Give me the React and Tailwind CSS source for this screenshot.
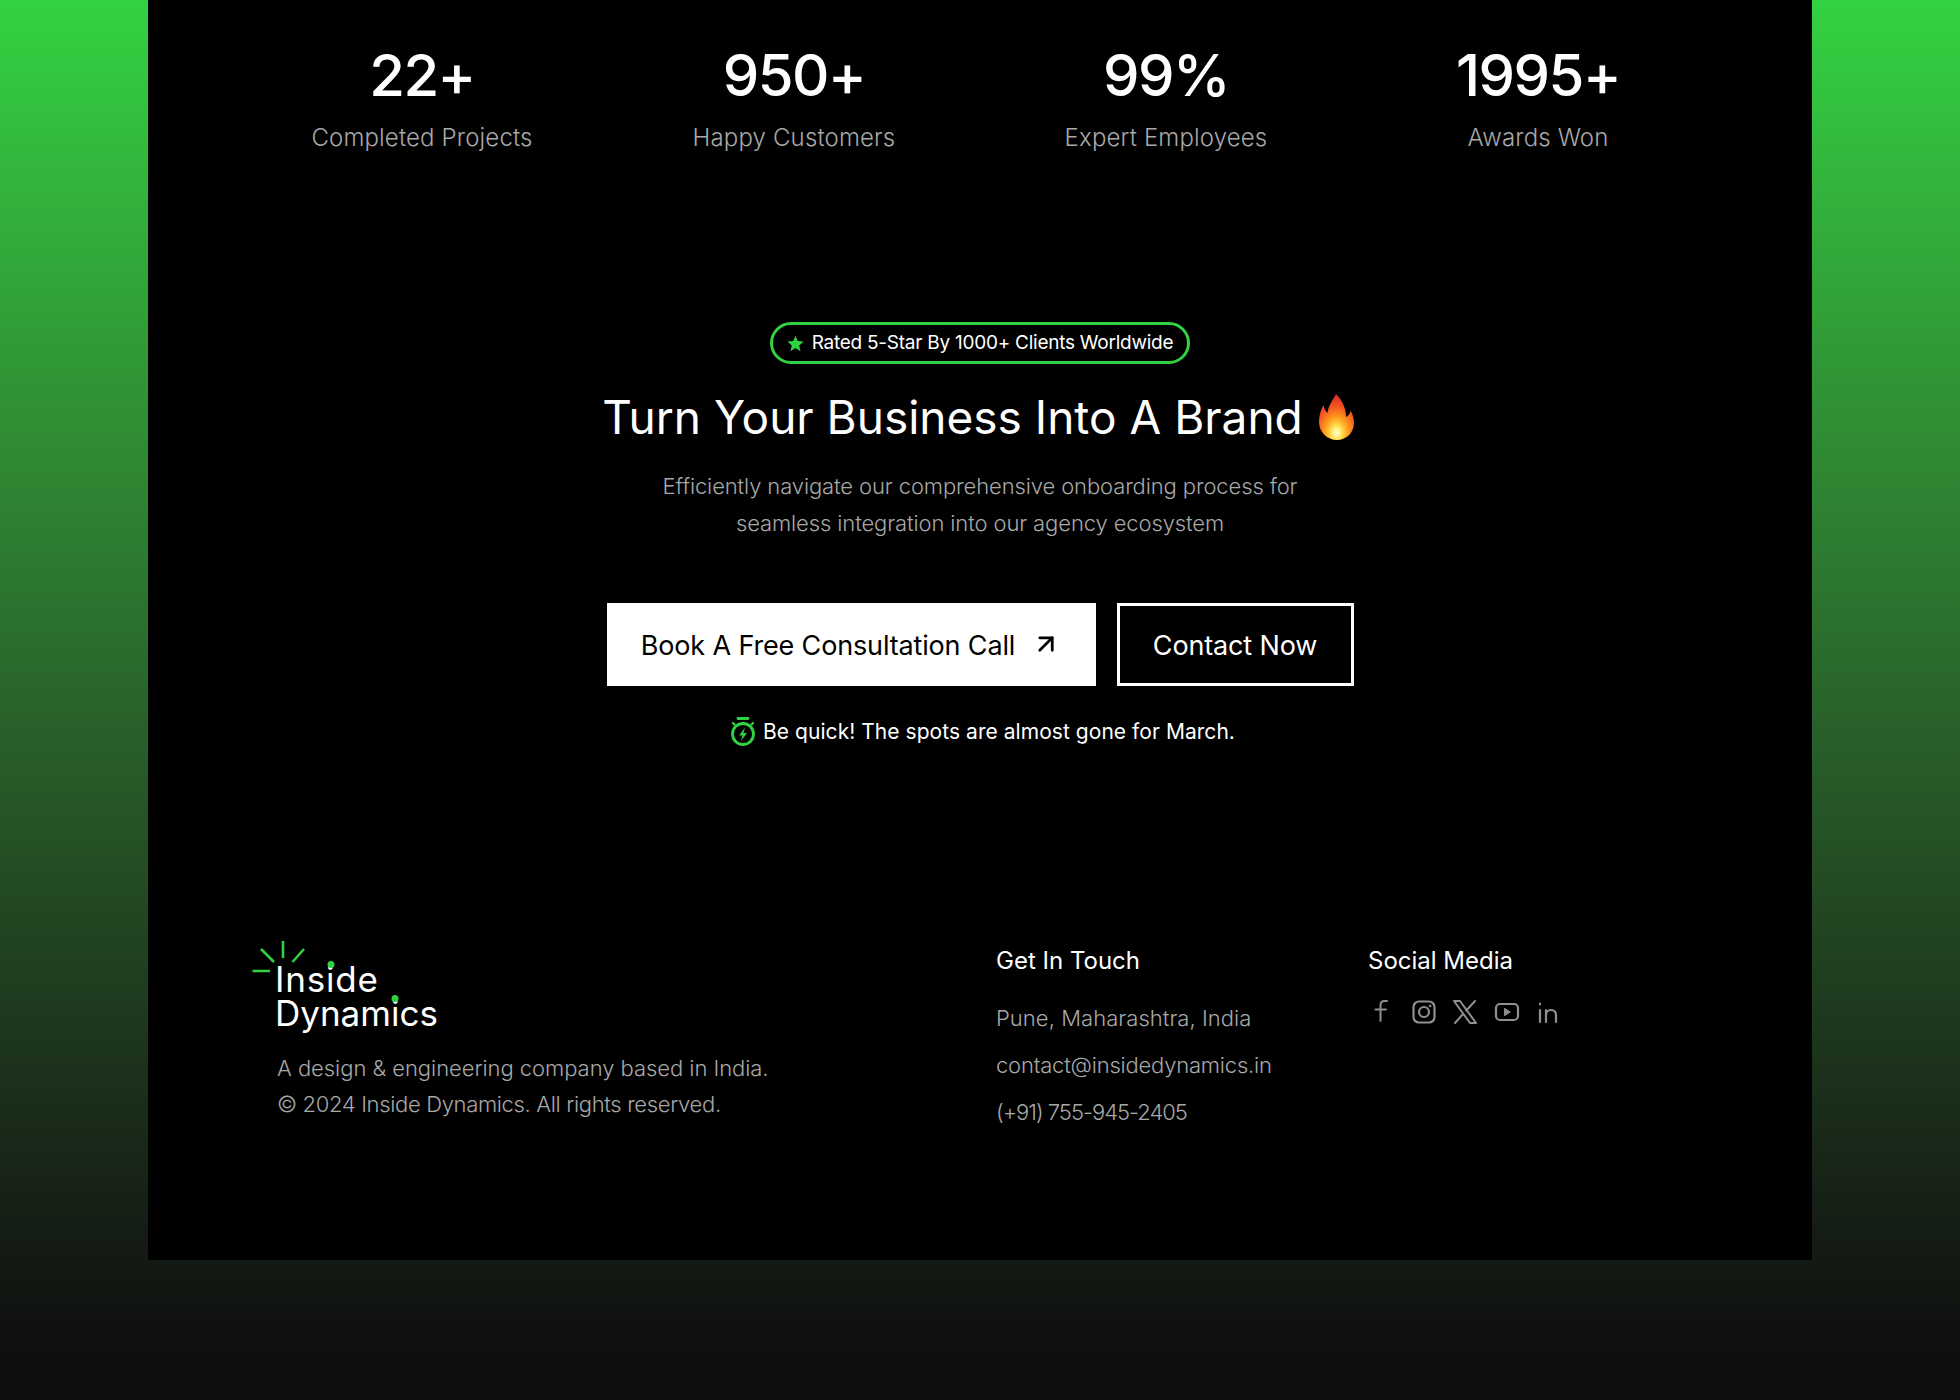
import React from "react";
import { ArrowUpRight } from "lucide-react";

const stats = [
  ["22+", "Completed Projects"],
  ["950+", "Happy Customers"],
  ["99%", "Expert Employees"],
  ["1995+", "Awards Won"],
];

function Flame() {
  return (
    <svg width="36" height="46" viewBox="0 0 36 46" className="shrink-0 mr-[3px]">
      <defs>
        <radialGradient id="fl" cx="0.5" cy="0.84" r="0.82">
          <stop offset="0" stopColor="#fffde7" />
          <stop offset="0.16" stopColor="#ffe95c" />
          <stop offset="0.38" stopColor="#ffa51f" />
          <stop offset="0.68" stopColor="#f4591e" />
          <stop offset="1" stopColor="#d92b2b" />
        </radialGradient>
      </defs>
      <path d="M17 0C14 6 9 12 8.500 19 6 17 5 14 4.500 11 1.500 16 0 22 0 28c0 10 8 18 18 18s17-8 17-17c0-4-1-9-3.500-12-.5 3-2.500 5-4.500 6 0-9-4-17-10-23z" fill="url(#fl)" />
    </svg>
  );
}

function Stopwatch() {
  return (
    <svg width="26" height="30" viewBox="0 0 26 30" fill="none" stroke="#32d142" strokeWidth="2.800" strokeLinecap="round" strokeLinejoin="round">
      <path d="M8 1.500h10" />
      <circle cx="13" cy="17" r="10.500" />
      <path d="M21.500 7.500l1.500 -1.500M4.500 7.500L3 6" strokeWidth="2.400" />
      <path d="M15 10.500l-6 8h3.500l-1.500 5.500 6-8h-3.500z" fill="#32d142" stroke="none" />
    </svg>
  );
}

function Rays() {
  return (
    <svg width="56" height="36" viewBox="0 0 56 36" fill="none" stroke="#32d142" strokeWidth="2.600" className="absolute left-[-23px] top-[-21px]">
      <path d="M31 0v17M9 8l13 13M52 8L40.500 21M0.500 30h17.500" />
    </svg>
  );
}

function LogoI() {
  return (
    <span className="relative">
      i
      <span className="absolute left-1/2 top-[3px] h-[7px] w-[7px] -translate-x-1/2 rounded-full bg-[#32d142]" />
    </span>
  );
}

function Social() {
  const p = { width: 28, height: 28, viewBox: "0 0 28 28", fill: "none", stroke: "#8f8f8f", strokeWidth: 2, strokeLinecap: "round", strokeLinejoin: "round" };
  return (
    <div className="flex items-center gap-[13.500px]">
      <svg {...p}><path d="M19 3h-2.500C14 3 12.500 4.500 12.500 7v16M7.500 11.500H18" /></svg>
      <svg {...p}><rect x="3.500" y="3.500" width="21" height="21" rx="5.500" strokeWidth="2.200" /><circle cx="14" cy="14" r="5" strokeWidth="2.200" /><circle cx="20" cy="8" r="1" fill="#8f8f8f" strokeWidth="0.800" /></svg>
      <svg {...p} strokeWidth="2"><path d="M3 3h6l16 22h-6z" /><path d="M24 3l-8.700 9.500M12 16L4 25" /></svg>
      <svg {...p}><rect x="3" y="6" width="22" height="16" rx="4" strokeWidth="2.200" /><path d="M11.800 10.500l5.500 3.500-5.500 3.500z" fill="#8f8f8f" strokeWidth="1" /></svg>
      <svg {...p}><path d="M6 12v12M6 5.500v.8M12 24V12M12 17c0-3 2.500-5 5-5 3.500 0 5 2 5 5.500V24" strokeWidth="2.200" /></svg>
    </div>
  );
}

export default function App() {
  return (
    <div className="h-[1400px] bg-gradient-to-b from-[#33d241] to-[#0e0e0e] to-[97%] font-['Inter','Liberation_Sans',sans-serif]">
      <div className="mx-[148px] h-[1260px] bg-black flex flex-col">
        <div className="mx-[88px] grid grid-cols-4 pt-[38px]">
          {stats.map(([n, l]) => (
            <div key={l} className="flex flex-col items-center">
              <div className="text-[58px] leading-[74px] font-medium tracking-[-1.500px] text-white">{n}</div>
              <div className="mt-[13px] text-[24px] leading-[26px] font-light tracking-[0.150px] text-[#a8a8a8]">{l}</div>
            </div>
          ))}
        </div>

        <div className="mt-[171px] flex flex-col items-center">
          <div className="h-[42px] w-[420px] rounded-full border-[3px] border-[#32d142] flex items-center justify-center gap-[8px]">
            <svg width="17" height="17" viewBox="0 0 24 24" fill="#32d142"><path d="M12 1l3.200 7.600 8.300.7-6.300 5.400 1.900 8.100L12 18.500l-7.100 4.300 1.900-8.100L.5 9.300l8.300-.7z" /></svg>
            <span className="text-[19px] font-normal text-white tracking-[-0.250px]">Rated 5-Star By 1000+ Clients Worldwide</span>
          </div>
          <div className="mt-[26px] h-[54px] flex items-center gap-[16px]">
            <h2 className="text-[46px] leading-[54px] font-normal text-white">Turn Your Business Into A Brand</h2>
            <Flame />
          </div>
          <p className="mt-[24px] text-center text-[22px] leading-[36.500px] font-light tracking-[-0.110px] text-[#a8a8a8]">
            Efficiently navigate our comprehensive onboarding process for
            <br />
            seamless integration into our agency ecosystem
          </p>
          <div className="mt-[62px] flex gap-[21px]">
            <button className="h-[83px] w-[489px] bg-white text-black flex items-center justify-center gap-[16px] pt-[3px] text-[27px] tracking-[-0.150px] font-normal">
              Book A Free Consultation Call
              <ArrowUpRight size={30} strokeWidth={2.200} className="mt-[-4px]" />
            </button>
            <button className="h-[83px] w-[237px] bg-black text-white border-[3px] border-white pt-[3px] text-[27px] tracking-[-0.150px] font-normal">
              Contact Now
            </button>
          </div>
          <div className="mt-[32px] ml-[5px] h-[28px] flex items-center gap-[7px]">
            <Stopwatch />
            <span className="text-[21px] font-normal tracking-[0.050px] text-white">Be quick! The spots are almost gone for March.</span>
          </div>
        </div>

        <div className="mt-[200px] ml-[129px] flex">
          <div className="w-[719px]">
            <div className="relative w-fit text-[35px] leading-[34px] font-normal text-white ml-[-2px] mt-[16px]">
              <Rays />
              <div className="tracking-[0.800px]">Ins<LogoI />de</div>
              <div>Dynam<LogoI />cs</div>
            </div>
            <p className="mt-[20px] text-[22px] leading-[36px] font-light text-[#a8a8a8]">
              <span className="block tracking-[-0.050px]">A design &amp; engineering company based in India.</span>
              <span className="block tracking-[-0.340px]">© 2024 Inside Dynamics. All rights reserved.</span>
            </p>
          </div>
          <div className="w-[372px]">
            <div className="text-[24px] leading-[30px] text-white font-normal">Get In Touch</div>
            <div className="mt-[27px] flex flex-col gap-[17px] text-[22px] leading-[30px] font-light text-[#a8a8a8]">
              <span className="tracking-[0.050px]">Pune, Maharashtra, India</span>
              <span className="tracking-[-0.200px]">contact@insidedynamics.in</span>
              <span className="tracking-[-1px]">(+91) 755-945-2405</span>
            </div>
          </div>
          <div>
            <div className="text-[24px] leading-[30px] text-white font-normal">Social Media</div>
            <div className="mt-[22px]"><Social /></div>
          </div>
        </div>
      </div>
    </div>
  );
}
